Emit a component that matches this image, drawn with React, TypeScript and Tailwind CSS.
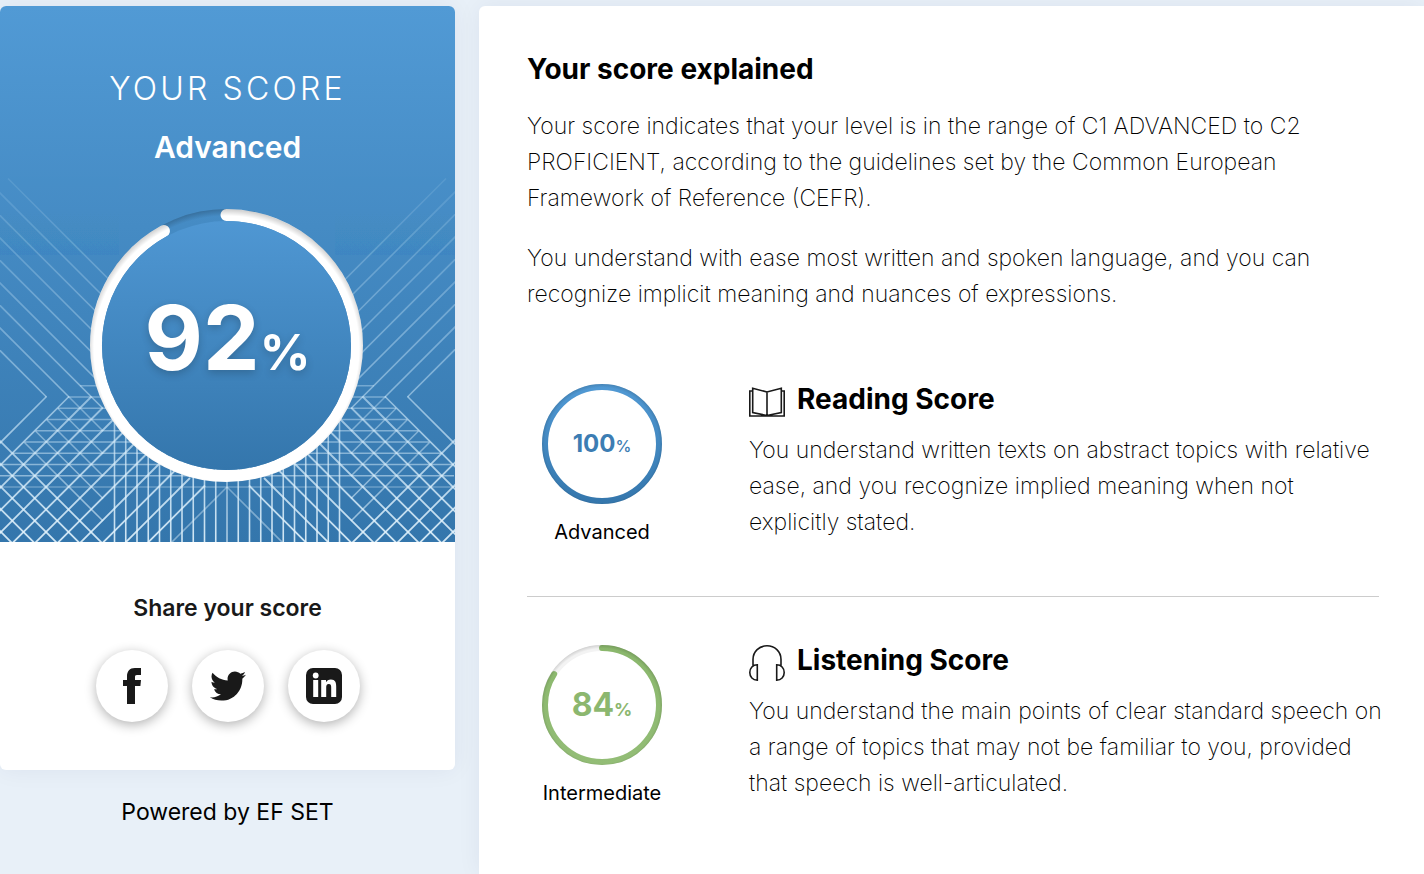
import React from "react";
import { FaTwitter } from "react-icons/fa";

const CENTER = 227;

type Line = [number, number, number, number, number];

function buildLines(): Line[] {
  const lines: Line[] = [];
  const mirrored = (x1: number, y1: number, x2: number, y2: number, o: number) => {
    lines.push([x1, y1, x2, y2, o]);
    lines.push([2 * CENTER - x1, y1, 2 * CENTER - x2, y2, o]);
  };
  const step = 22.5;
  const elbows = [46.5, 69, 91.5];
  for (let k = 0; k < 9; k++) {
    const c = 170.5 + k * step;
    const endX = k === 8 ? elbows[0] : k === 7 ? elbows[1] : k === 6 ? 103 : 118;
    mirrored(k === 0 ? 8 : -10, c + (k === 0 ? 8 : -10), endX, c + endX, 0.9);
  }
  for (let k = 0; k < 12; k++) {
    const s = 443 + k * step;
    const startX = k < 3 ? elbows[k] : k < 8 ? 91.5 + (k - 2) * 11.25 : 160 + (k - 8) * 15;
    mirrored(startX, s - startX, s - 545, 545, k > 1 ? 1.4 : 1);
  }
  for (let k = 0; k < 5; k++) {
    const c = 328 + k * step;
    const startX = (466 - c) / 2;
    mirrored(startX, c + startX, 103, c + 103, 0.7);
  }
  for (let k = 0; k < 5; k++) {
    const c = 441 + k * step;
    mirrored(-2, c - 2, 545 - c, 545, 1.2);
  }
  mirrored(CENTER, 487, 167, 547, 0.5);
  const starts = [80, 68, 58, 47, 36, 25, 13, 0, 0, 0];
  starts.forEach((x, k) => {
    const y = 385.7 + k * 11.25;
    lines.push([x, y, 2 * CENTER - x, y, k === 9 ? 0.4 : 0.7]);
  });
  for (let k = 0; k < 11; k++) {
    const x = CENTER - k * 11.25;
    mirrored(x, 420, x, 545, k === 0 ? 0.45 : 1);
  }
  return lines;
}

const patternLines = buildLines();

function HeroArt() {
  const circumference = 2 * Math.PI * 130.5;
  return (
    <svg
      className="col-start-1 row-start-1 h-full w-full"
      viewBox="0 6 455 536"
      preserveAspectRatio="xMidYMid slice"
      aria-hidden="true"
    >
      <defs>
        <linearGradient id="lineFade" gradientUnits="userSpaceOnUse" x1="0" y1="170" x2="0" y2="542">
          <stop offset="0" stopColor="#c6e4f8" stopOpacity="0.12" />
          <stop offset="0.5" stopColor="#c6e4f8" stopOpacity="0.5" />
          <stop offset="1" stopColor="#e4f4fd" stopOpacity="0.9" />
        </linearGradient>
        <linearGradient id="disc" x1="0" y1="0" x2="0" y2="1">
          <stop offset="0" stopColor="#4f97d3" />
          <stop offset="1" stopColor="#3476ac" />
        </linearGradient>
        <radialGradient id="ringShade" gradientUnits="userSpaceOnUse" cx="226.5" cy="348.5" r="139.5">
          <stop offset="0.95" stopColor="#000" stopOpacity="0" />
          <stop offset="1" stopColor="#000" stopOpacity="0.2" />
        </radialGradient>
      </defs>
      <g stroke="url(#lineFade)">
        {patternLines.map(([x1, y1, x2, y2, o], i) => (
          <path
            key={i}
            d={`M${x1} ${y1}L${x2 + (x1 === x2 ? 0.01 : 0)} ${y2 + (y1 === y2 ? 0.01 : 0)}`}
            strokeWidth={o > 1 ? 1.8 : 1.6}
            opacity={Math.min(o, 1)}
          />
        ))}
      </g>
      <circle
        cx="226.5"
        cy="345.5"
        r="130.5"
        fill="none"
        stroke="#fff"
        strokeWidth="12"
        strokeLinecap="round"
        strokeDasharray={`${circumference * 0.92} ${circumference}`}
        transform="rotate(-90 226.5 345.5)"
      />
      <circle cx="226.5" cy="345.5" r="136.5" fill="url(#ringShade)" />
      <circle cx="226.5" cy="345.5" r="124.5" fill="url(#disc)" />
    </svg>
  );
}

function FacebookIcon() {
  return (
    <svg viewBox="0 0 36 36" className="size-9" fill="#191919" aria-hidden="true">
      <path d="M13 36V18H9v-6h4V8.300C13 3.400 15.700 0 20.800 0H27v7h-4c-1.700 0-2 .7-2 2.200V12h6l-.6 6H21v18z" />
    </svg>
  );
}

function LinkedinIcon() {
  return (
    <svg viewBox="0 0 36 36" className="size-9" aria-hidden="true">
      <rect width="36" height="36" rx="7" fill="#191919" />
      <circle cx="9.700" cy="7.500" r="2.900" fill="#fff" />
      <path fill="#fff" d="M7.200 12h5v17h-5zM15.200 12H20v2.300c.8-1.500 2.500-2.700 4.900-2.700 4.400 0 5.300 3 5.300 6.900V29h-5v-9.200c0-2-.2-3.700-2.400-3.700s-2.600 1.700-2.600 3.600V29h-5z" />
    </svg>
  );
}

function BookIcon() {
  return (
    <svg viewBox="0 0 36 36" className="size-9 shrink-0" fill="none" stroke="#191919" strokeWidth="1.600" aria-hidden="true">
      <path d="M18 8 3.700 4.200v24.300L18 31.500l14.300-3V4.200zM18 8v23.500M3.700 7H.8v25h34.400V7h-2.900" />
    </svg>
  );
}

function HeadphonesIcon() {
  return (
    <svg viewBox="0 0 36 36" className="size-9 shrink-0" fill="none" stroke="#191919" strokeWidth="1.600" aria-hidden="true">
      <path d="M4 21V14.500C4 6.500 10.300.8 18 .8s14 5.700 14 13.700V21M8.300 19.800v15.400C3.800 35.200.8 32 .8 27.500s3-7.700 7.500-7.700zM27.700 19.800v15.400c4.500 0 7.500-3.200 7.500-7.700s-3-7.700-7.500-7.700z" />
    </svg>
  );
}

interface SkillProps {
  id: string;
  value: number;
  level: string;
  title: string;
  icon: React.ReactNode;
  top: string;
  bottom: string;
  numberClass: string;
  percentClass: string;
  children: React.ReactNode;
}

function Skill({ id, value, level, title, icon, top, bottom, numberClass, percentClass, children }: SkillProps) {
  const c = 2 * Math.PI * 57;
  return (
    <section className="flex gap-[72px]">
      <div className="flex w-[150px] shrink-0 flex-col items-center">
        <div className="grid size-[120px] place-items-center">
          <svg viewBox="0 0 120 120" className="col-start-1 row-start-1 size-full" fill="none" aria-hidden="true">
            <defs>
              <linearGradient id={`${id}Ring`} gradientUnits="userSpaceOnUse" x1="120" y1="0" x2="0" y2="0">
                <stop offset="0" stopColor={top} />
                <stop offset="1" stopColor={bottom} />
              </linearGradient>
              <radialGradient id={`${id}Shade`} gradientUnits="userSpaceOnUse" cx="60" cy="61" r="61">
                <stop offset="0.94" stopColor="#000" stopOpacity="0" />
                <stop offset="1" stopColor="#000" stopOpacity="0.14" />
              </radialGradient>
            </defs>
            <circle cx="60" cy="60" r="57" stroke="#f3f3f3" strokeWidth="6" />
            <circle
              cx="60"
              cy="60"
              r="57"
              stroke={`url(#${id}Ring)`}
              strokeWidth="6"
              strokeLinecap="round"
              strokeDasharray={`${(c * value) / 100} ${c}`}
              transform="rotate(-90 60 60)"
            />
            <circle cx="60" cy="60" r="57" stroke={`url(#${id}Shade)`} strokeWidth="6" />
          </svg>
          <p className={`col-start-1 row-start-1 font-bold ${numberClass}`}>
            {value}
            <span className={percentClass}>%</span>
          </p>
        </div>
        <p className="mt-4 text-xl leading-6">{level}</p>
      </div>
      <div className="-mr-2 min-w-0 flex-1">
        <div className="flex gap-3">
          {icon}
          <h3 className="text-[28px] leading-[30px] font-bold">{title}</h3>
        </div>
        <p className="mt-3 text-[23px] leading-9 font-extralight">{children}</p>
      </div>
    </section>
  );
}

const shareButton =
  "flex size-[72px] cursor-pointer items-center justify-center rounded-full bg-white text-[#191919] shadow-[0_3px_12px_rgba(0,0,0,0.3)]";

export default function App() {
  return (
    <div className="flex min-h-screen items-stretch gap-6 overflow-hidden bg-[#e8f0f8] pt-1.5 font-['Inter',sans-serif] text-black">
      <aside className="w-[455px] shrink-0">
        <div className="overflow-hidden rounded-md bg-white shadow-[0_0_24px_rgba(0,0,80,0.06)]">
          <div className="grid h-[536px] bg-linear-to-b from-[#519ad5] to-[#3476ac]">
            <HeroArt />
            <div className="col-start-1 row-start-1 flex flex-col items-center text-white">
              <h1 className="mt-[63px] text-[32px] leading-10 font-light tracking-widest">YOUR SCORE</h1>
              <p className="mt-5 text-[30px] leading-9 font-semibold">Advanced</p>
              <p className="mt-[113px] text-[90px] leading-[120px] font-bold [text-shadow:0_3px_8px_rgba(0,0,0,0.2)]">
                92<span className="text-[50px]">%</span>
              </p>
            </div>
          </div>
          <div className="flex flex-col items-center pt-[50px] pb-12">
            <h2 className="text-[23px] leading-8 font-semibold text-[#191919]">Share your score</h2>
            <div className="mt-[26px] flex gap-6">
              <button type="button" aria-label="Share on Facebook" className={shareButton}>
                <FacebookIcon />
              </button>
              <button type="button" aria-label="Share on Twitter" className={shareButton}>
                <FaTwitter className="size-9" />
              </button>
              <button type="button" aria-label="Share on LinkedIn" className={shareButton}>
                <LinkedinIcon />
              </button>
            </div>
          </div>
        </div>
        <p className="mt-6 text-center text-[23px] leading-9">Powered by EF SET</p>
      </aside>

      <main className="min-w-0 flex-1 rounded-tl-md bg-white pt-[45px] pr-[45px] pb-12 pl-12 shadow-[0_0_24px_rgba(0,0,80,0.06)]">
        <h2 className="text-[28px] leading-9 font-bold">Your score explained</h2>
        <p className="mt-[21px] text-[23px] leading-9 font-extralight">
          Your score indicates that your level is in the range of C1 ADVANCED to C2 PROFICIENT, according to the
          guidelines set by the Common European Framework of Reference (CEFR).
        </p>
        <p className="mt-6 text-[23px] leading-9 font-extralight">
          You understand with ease most written and spoken language, and you can recognize implicit meaning and nuances
          of expressions.
        </p>
        <div className="mt-[72px] border-b border-[#cccccc] pb-[52px]">
          <Skill
            id="reading"
            value={100}
            level="Advanced"
            title="Reading Score"
            icon={<BookIcon />}
            top="#519ad5"
            bottom="#3476ac"
            numberClass="text-2xl leading-8 text-[#3c7db3]"
            percentClass="text-base font-medium"
          >
            You understand written texts on abstract topics with relative ease, and you recognize implied meaning when
            not explicitly stated.
          </Skill>
        </div>
        <div className="pt-12">
          <Skill
            id="listening"
            value={84}
            level="Intermediate"
            title="Listening Score"
            icon={<HeadphonesIcon />}
            top="#8ab76c"
            bottom="#93bd76"
            numberClass="text-[32px] leading-10 text-[#8cb76f]"
            percentClass="text-lg"
          >
            You understand the main points of clear standard speech on a range of topics that may not be familiar to
            you, provided that speech is well-articulated.
          </Skill>
        </div>
      </main>
    </div>
  );
}
